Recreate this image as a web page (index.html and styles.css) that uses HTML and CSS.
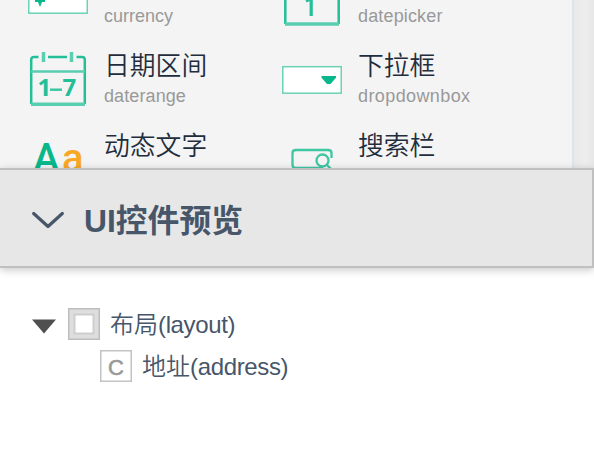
FILE: index.html
```html
<!DOCTYPE html>
<html lang="zh-CN">
<head>
<meta charset="utf-8">
<title>UI控件预览</title>
<link rel="stylesheet" href="styles.css">
</head>
<body>
<div class="top">
  <div class="palette">
    <div class="item">
      <svg class="icon" width="60" height="64" viewBox="0 0 60 64"><rect class="box" x=".75" y="18" width="58.5" height="30.2"/><path class="fill" d="M11 32h2v3h4v2h-3l-2 5l-2-5h-3v-2h4z"/></svg>
      <div class="label"><span class="name"></span><span class="code currency">currency</span></div>
    </div>
    <div class="item">
      <svg class="icon" width="60" height="64" viewBox="0 0 60 64"><path class="line" d="M3.300 10V59M56.700 10V59"/><path class="base" d="M3 59H57"/><path class="one" d="M24 36L29.200 33.500V51"/></svg>
      <div class="label"><span class="name"></span><span class="code datepicker">datepicker</span></div>
    </div>
    <div class="item">
      <svg class="icon" width="60" height="64" viewBox="0 0 60 64"><path class="line" d="M10.500 12H6Q3.200 12 3.200 14.700V59M20 12H39M48.500 12H54Q56.800 12 56.800 14.700V59"/><path class="tick" d="M15.500 7V17M43.500 7V17"/><path class="soft" d="M3 26.500H57"/><path class="base" d="M3 59.200H57"/><text class="digit" x="9.500" y="51">1</text><path class="dash" d="M22 44.700H34"/><text class="digit" x="34.500" y="51">7</text></svg>
      <div class="label"><span class="name">日期区间</span><span class="code daterange">daterange</span></div>
    </div>
    <div class="item">
      <svg class="icon" width="60" height="64" viewBox="0 0 60 64"><rect class="box" x=".75" y="21.700" width="58.5" height="26.500"/><path class="fill" d="M39.500 31H54V32.800L48.500 39H45L39.500 32.800Z"/></svg>
      <div class="label"><span class="name">下拉框</span><span class="code dropdown">dropdownbox</span></div>
    </div>
    <div class="item">
      <svg class="icon letters" width="56" height="64" viewBox="0 0 56 64"><text class="big-a" x="5" y="47">A</text><text class="small-a" x="34" y="47">a</text></svg>
      <div class="label"><span class="name">动态文字</span></div>
    </div>
    <div class="item">
      <svg class="icon" width="60" height="64" viewBox="0 0 60 64"><path class="search" d="M41 43H14Q10.500 43 10.500 40V28Q10.500 25 14 25H46Q49.500 25 49.500 28V33"/><circle class="search" cx="40.500" cy="35.500" r="6"/><path class="search" d="M45 40L50 45"/></svg>
      <div class="label"><span class="name">搜索栏</span></div>
    </div>
  </div>
  <div class="gutter"></div>
</div>
<div class="panel-head">
  <svg class="chevron" width="32" height="18" viewBox="0 0 32 18"><path d="M1.700 2.500L16 15.500L30.300 2.500"/></svg>
  <h1><span class="ui">UI</span>控件预览</h1>
</div>
<div class="tree">
  <div class="node">
    <svg class="arrow" width="24" height="15" viewBox="0 0 24 15"><path d="M0 .5H24L12 14.500Z"/></svg>
    <svg class="glyph" width="32" height="32" viewBox="0 0 32 32"><rect class="g-fill" x=".75" y=".75" width="30.500" height="30.500"/><rect class="g-hole" x="6.500" y="6.500" width="19" height="19"/></svg>
    <span class="title">布局<span class="latin">(layout)</span></span>
  </div>
  <div class="node child">
    <svg class="glyph" width="32" height="32" viewBox="0 0 32 32"><rect class="g-box" x=".75" y=".75" width="30.500" height="30.500"/><text class="g-text" x="16" y="24.800" text-anchor="middle">C</text></svg>
    <span class="title">地址<span class="latin">(address)</span></span>
  </div>
</div>
</body>
</html>
```
FILE: styles.css
```css
* { box-sizing: border-box; }
body { margin: 0; width: 594px; height: 462px; overflow: hidden; background: #fff; font-family: "Liberation Sans", "Noto Sans CJK SC", sans-serif; }
.top { display: flex; height: 168px; overflow: hidden; }
.palette { flex: none; width: 574px; height: 168px; overflow: hidden; display: grid; grid-template: 0 / 254px 254px; grid-auto-rows: 80px; align-content: start; padding-left: 28px; background: #f4f4f4; border-right: 2px solid #dde5eb; }
.palette::before { content: ""; grid-column: 1 / -1; }
.item { display: flex; align-items: flex-start; margin-top: -35px; margin-bottom: 35px; }
.icon { display: block; width: 60px; height: 64px; flex: none; }
.label { margin-left: 16px; display: flex; flex-direction: column; white-space: nowrap; }
.name { height: 40px; font: 350 25.800px/38px "Noto Sans CJK SC", sans-serif; color: #1f2d3d; }
.code { font-size: 18px; line-height: 22px; color: #999; }
.datepicker { letter-spacing: .15px; }
.daterange { letter-spacing: .1px; }
.dropdown { letter-spacing: .4px; }
.box { fill: #fff; stroke: #6bd2b5; stroke-width: 1.500px; }
.fill { fill: #08b78a; }
.line, .soft, .base, .search, .tick, .dash, .one { fill: none; stroke: #24be98; stroke-width: 2.500px; }
.tick { stroke: #5aceb0; stroke-width: 3.500px; }
.soft { stroke: #5aceb0; }
.base { stroke: #5aceb0; stroke-width: 3.500px; }
.dash { stroke: #3fc6a3; }
.one { stroke-width: 3.200px; }
.search { stroke: #3fc6a3; stroke-width: 2.300px; }
.digit { font: 700 24px "Open Sans", sans-serif; fill: #24be98; }
.letters { width: 56px; margin-right: 4px; }
.big-a { font: 500 40px Roboto, sans-serif; fill: #08b78a; }
.small-a { font: 500 40px Roboto, sans-serif; fill: #f9a825; }
.panel-head { position: relative; height: 100px; display: flex; align-items: center; padding: 3px 0 0 32px; background: #e7e7e7; border: solid #c0c0c0; border-width: 2px 2px 2px 0; box-shadow: 0 2px 8px rgba(0, 0, 0, .22); }
.chevron { margin-right: 20px; }
.chevron path { fill: none; stroke: #475669; stroke-width: 3.200px; stroke-linecap: round; stroke-linejoin: round; }
h1 { margin: 0; font: 600 31.800px/40px "Noto Sans CJK SC", sans-serif; color: #475669; white-space: nowrap; }
.ui { font-family: "Liberation Sans", sans-serif; font-weight: 700; }
.gutter { flex: 1; background: linear-gradient(90deg, #e9e9e9, #ededed 60%, #e7e7e7); }
.tree { padding: 35px 0 0 32px; }
.node { display: flex; align-items: center; height: 42px; }
.child { padding-left: 68px; }
.arrow { margin: 5px 12px 0 0; }
.arrow path { fill: #4f4f4f; }
.glyph { flex: none; }
.g-fill { fill: #dedede; stroke: #bdbdbd; stroke-width: 1.500px; }
.g-hole { fill: #fff; stroke: #cecece; stroke-width: 2px; }
.g-box { fill: #fff; stroke: #c3c3c3; stroke-width: 1.500px; }
.g-text { font: 400 22px "Liberation Sans", sans-serif; fill: #999; stroke: #999; stroke-width: .6px; }
.title { margin: -1px 0 0 10px; font: 350 24px/32px "Noto Sans CJK SC", sans-serif; color: #475669; white-space: nowrap; }
.latin { font-family: "Liberation Sans", sans-serif; font-weight: 400; letter-spacing: -.35px; }
```
